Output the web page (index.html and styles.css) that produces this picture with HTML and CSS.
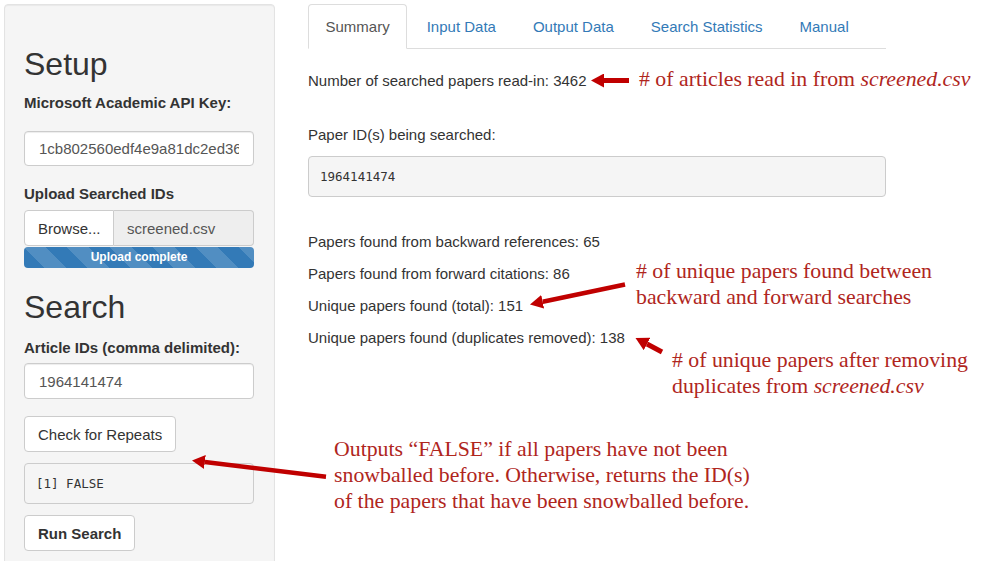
FILE: index.html
```html
<!DOCTYPE html>
<html>
<head>
<meta charset="utf-8">
<title>Snowball search</title>
<link rel="stylesheet" href="styles.css">
</head>
<body>
<div class="page">
  <div class="layout">
    <aside class="sidebar">
      <h2 class="heading heading-setup">Setup</h2>
      <label class="field-label label-key">Microsoft Academic API Key:</label>
      <input class="text-input input-key" type="text" value="1cb802560edf4e9a81dc2ed36a7c0b11">
      <label class="field-label label-upload">Upload Searched IDs</label>
      <div class="file-group">
        <span class="browse">Browse...</span>
        <span class="file-name">screened.csv</span>
      </div>
      <div class="progress">Upload complete</div>
      <h2 class="heading heading-search">Search</h2>
      <label class="field-label label-ids">Article IDs (comma delimited):</label>
      <input class="text-input input-ids" type="text" value="1964141474">
      <button class="btn btn-check" type="button">Check for Repeats</button>
      <pre class="output output-side">[1] FALSE</pre>
      <button class="btn btn-run" type="button">Run Search</button>
    </aside>

    <main class="main">
      <ul class="tabs">
        <li><a class="tab active" href="#">Summary</a></li>
        <li><a class="tab" href="#">Input Data</a></li>
        <li><a class="tab" href="#">Output Data</a></li>
        <li><a class="tab" href="#">Search Statistics</a></li>
        <li><a class="tab" href="#">Manual</a></li>
      </ul>
      <p class="line line-read">Number of searched papers read-in: 3462</p>
      <p class="line line-ids">Paper ID(s) being searched:</p>
      <pre class="output output-main">1964141474</pre>
      <p class="line line-back">Papers found from backward references: 65</p>
      <p class="line line-stat">Papers found from forward citations: 86</p>
      <p class="line line-stat">Unique papers found (total): 151</p>
      <p class="line line-stat">Unique papers found (duplicates removed): 138</p>
    </main>
  </div>

  <div class="note note-read"># of articles read in from <em>screened.csv</em></div>
  <div class="note note-unique"># of unique papers found between<br>backward and forward searches</div>
  <div class="note note-dup"># of unique papers after removing<br>duplicates from <em>screened.csv</em></div>
  <div class="note note-false">Outputs “FALSE” if all papers have not been<br>snowballed before. Otherwise, returns the ID(s)<br>of the papers that have been snowballed before.</div>

  <svg class="arrows" width="987" height="561" viewBox="0 0 987 561">
    <defs>
      <marker id="head" markerWidth="13" markerHeight="14" refX="0" refY="7" orient="auto" markerUnits="userSpaceOnUse">
        <path d="M0,0 L13,7 L0,14 Z" fill="#c00000"/>
      </marker>
    </defs>
    <line x1="629" y1="80.5" x2="604" y2="80.5" stroke="#c00000" stroke-width="5" marker-end="url(#head)"/>
    <line x1="625" y1="284.5" x2="542.7" y2="301.8" stroke="#c00000" stroke-width="4.5" marker-end="url(#head)"/>
    <line x1="662" y1="352" x2="647" y2="344" stroke="#c00000" stroke-width="5" marker-end="url(#head)"/>
    <line x1="326" y1="476.8" x2="204.9" y2="462" stroke="#c00000" stroke-width="4.5" marker-end="url(#head)"/>
  </svg>
</div>
</body>
</html>
```

FILE: styles.css
```css
html, body {
  margin: 0;
  padding: 0;
  overflow: hidden;
  background: #fff;
}

body {
  font-family: "Liberation Sans", Arial, sans-serif;
  font-size: 15px;
  line-height: 21px;
  color: #333;
}

.page {
  position: relative;
  width: 987px;
  height: 561px;
  overflow: hidden;
}

.layout {
  display: flex;
  align-items: flex-start;
}

/* ---------- sidebar ---------- */
.sidebar {
  margin: 4px 0 0 4px;
  width: 271px;
  box-sizing: border-box;
  padding: 19px 20px 19px 19px;
  background: #f5f5f5;
  border: 1px solid #e3e3e3;
  border-radius: 4px;
  box-shadow: inset 0 1px 1px rgba(0, 0, 0, .05);
  display: flex;
  flex-direction: column;
  align-items: flex-start;
}

.heading {
  margin: 0;
  font-size: 32px;
  line-height: 35px;
  font-weight: 500;
  color: #333;
}

.heading-setup { margin-top: 23px; }
.heading-search { margin-top: 22px; }

.field-label {
  display: block;
  font-weight: 700;
  line-height: 21px;
}

.label-key { margin-top: 10px; }
.label-upload { margin-top: 17px; }
.label-ids { margin-top: 12px; }

.text-input {
  display: block;
  width: 230px;
  height: 35px;
  box-sizing: border-box;
  padding: 0 14px;
  border: 1px solid #ccc;
  border-radius: 4px;
  background: #fff;
  box-shadow: inset 0 1px 1px rgba(0, 0, 0, .075);
  font-family: "Liberation Sans", Arial, sans-serif;
  font-size: 15px;
  color: #555;
  outline: none;
}

.input-key { margin-top: 18px; }
.input-ids { margin-top: 5px; height: 36px; }

.file-group {
  margin-top: 6px;
  display: flex;
  width: 230px;
  height: 36px;
}

.browse,
.file-name {
  display: flex;
  align-items: center;
  box-sizing: border-box;
  border: 1px solid #ccc;
  padding: 0 13px;
}

.browse {
  width: 90px;
  background: #fff;
  color: #333;
  border-radius: 4px 0 0 4px;
}

.file-name {
  flex: 1;
  background: #eee;
  color: #555;
  border-left: none;
  border-radius: 0 4px 4px 0;
}

.progress {
  margin-top: 1px;
  width: 230px;
  height: 21px;
  border-radius: 4px;
  background-color: #337ab7;
  background-image: linear-gradient(45deg,
    rgba(255, 255, 255, .15) 25%, transparent 25%,
    transparent 50%, rgba(255, 255, 255, .15) 50%,
    rgba(255, 255, 255, .15) 75%, transparent 75%, transparent);
  background-size: 43px 43px;
  color: #fff;
  font-size: 12px;
  font-weight: 700;
  line-height: 21px;
  text-align: center;
}

.btn {
  display: block;
  height: 36px;
  box-sizing: border-box;
  padding: 0 13px;
  border: 1px solid #ccc;
  border-radius: 4px;
  background: #fff;
  color: #333;
  font-family: "Liberation Sans", Arial, sans-serif;
  font-size: 15px;
  line-height: 21px;
  white-space: nowrap;
}

.btn-check { margin-top: 17px; }
.btn-run { margin-top: 11px; font-weight: 700; }

.output {
  margin: 0;
  height: 41px;
  box-sizing: border-box;
  padding: 0 11px;
  border: 1px solid #ccc;
  border-radius: 4px;
  background: #f5f5f5;
  color: #333;
  font-family: "DejaVu Sans Mono", "Liberation Mono", monospace;
  font-size: 12.5px;
  line-height: 39px;
}

.output-side {
  margin-top: 11px;
  width: 230px;
}

/* ---------- main ---------- */
.main {
  margin: 4px 0 0 33px;
  width: 578px;
}

.tabs {
  display: flex;
  list-style: none;
  margin: 0;
  padding: 0;
  border-bottom: 1px solid #ddd;
}

.tabs li {
  margin: 0 2px -1px 0;
}

.tab {
  display: block;
  padding: 11px 16.5px;
  line-height: 21px;
  border: 1px solid transparent;
  border-radius: 4px 4px 0 0;
  color: #337ab7;
  text-decoration: none;
}

.tab.active {
  color: #555;
  background: #fff;
  border-color: #ddd;
  border-bottom-color: transparent;
}

.line {
  margin: 0;
}

.line-read { margin-top: 21px; }
.line-ids { margin-top: 33px; }
.output-main { margin-top: 11px; width: 578px; }
.line-back { margin-top: 34px; }
.line-stat { margin-top: 11px; }

/* ---------- annotations ---------- */
.note {
  position: absolute;
  font-family: "Liberation Serif", "Times New Roman", serif;
  font-size: 21.8px;
  line-height: 25.8px;
  color: #b0261d;
  white-space: nowrap;
}

.note em { font-style: italic; }

.note-read { left: 639px; top: 67px; }
.note-unique { left: 636px; top: 259px; }
.note-dup { left: 672px; top: 348px; }
.note-false { left: 334px; top: 437px; }

.arrows {
  position: absolute;
  left: 0;
  top: 0;
  pointer-events: none;
}
```
